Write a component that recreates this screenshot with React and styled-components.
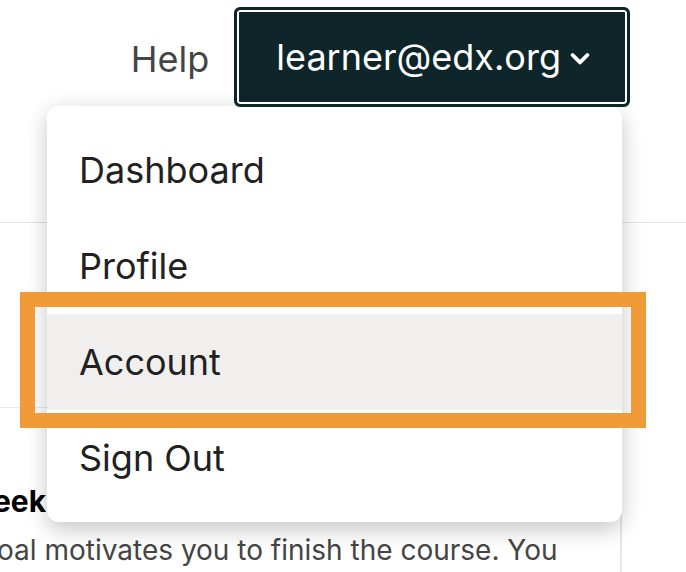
import styled, { createGlobalStyle } from 'styled-components';

const GlobalStyle = createGlobalStyle`
    html, body {
        margin: 0;
        padding: 0;
        background: #fff;
        overflow: hidden;
    }
    body {
        font-family: Inter, "Noto Sans", sans-serif;
    }
`;

export default function App() {
    return (
        <Page>
            <GlobalStyle />
            <Header>
                <Nav>
                    <HelpLink>Help</HelpLink>
                    <UserMenu>
                        <UserButton>
                            learner@edx.org
                            <Chevron />
                        </UserButton>
                        <Menu>
                            <MenuItem>Dashboard</MenuItem>
                            <MenuItem>Profile</MenuItem>
                            <MenuItem $active>Account</MenuItem>
                            <MenuItem>Sign Out</MenuItem>
                        </Menu>
                    </UserMenu>
                </Nav>
            </Header>
            <GoalCard>
                <CardTitle>eek</CardTitle>
                <CardText>oal motivates you to finish the course. You</CardText>
            </GoalCard>
        </Page>
    );
}

function Chevron() {
    return (
        <svg width="20" height="14" viewBox="0 0 20 14" fill="none">
            <path d="M2.6 3 L10 10.4 L17.4 3" stroke="#fff" strokeWidth="3.8" strokeLinecap="round" strokeLinejoin="round" />
        </svg>
    );
}

const Page = styled.div`
    width: 686px;
    height: 572px;
    overflow: hidden;
    position: relative;
`;

const Header = styled.header`
    box-sizing: border-box;
    height: 223px;
    border-bottom: 1px solid #e3e3e3;
    display: flex;
    justify-content: flex-end;
    align-items: flex-start;
    padding: 7px 56px 0 0;
`;

const Nav = styled.nav`
    display: flex;
    align-items: center;
    gap: 25px;
`;

const HelpLink = styled.a`
    font-size: 36px;
    color: #454545;
    line-height: 1;
    padding-top: 4px;
`;

const UserMenu = styled.div`
    position: relative;
`;

const UserButton = styled.button`
    box-sizing: border-box;
    height: 100px;
    display: flex;
    align-items: center;
    gap: 9px;
    padding: 0 37px 0 39px;
    background: #0e2629;
    border: 3px solid #0e2629;
    box-shadow: inset 0 0 0 2px #fff;
    border-radius: 6px;
    color: #fff;
    font-family: Inter, sans-serif;
    font-size: 36px;
    line-height: 1;
    position: relative;
    z-index: 3;

    svg {
        margin-top: 3px;
    }
`;

const Menu = styled.div`
    position: absolute;
    top: 99px;
    right: 8px;
    width: 575px;
    box-sizing: border-box;
    padding: 16px 0;
    background: #fff;
    border-radius: 12px;
    box-shadow: 0 10px 22px rgba(0, 0, 0, 0.16), 0 0 22px rgba(0, 0, 0, 0.08);
    z-index: 2;
`;

const MenuItem = styled.div`
    position: relative;
    height: 96px;
    display: flex;
    align-items: center;
    padding: 0 32px;
    font-size: 36px;
    color: #212121;
    background: ${(p) => (p.$active ? '#f0efed' : 'transparent')};

    ${(p) =>
        p.$active &&
        `
        &::after {
            content: '';
            position: absolute;
            top: -22px;
            bottom: -18px;
            left: -27px;
            right: -24px;
            border: 15px solid #f09a38;
        }
    `}
`;

const GoalCard = styled.section`
    margin-top: 184px;
    margin-left: -3px;
    width: 625px;
    height: 200px;
    box-sizing: border-box;
    border-top: 1px solid #e8e8e8;
    border-right: 2px solid #e8e8e8;
    padding-top: 78px;
`;

const CardTitle = styled.h3`
    margin: 0 0 0 -4px;
    font-size: 30px;
    font-weight: 700;
    color: #000;
    line-height: 1;
`;

const CardText = styled.p`
    margin: 20px 0 0;
    font-size: 28px;
    color: #454545;
    line-height: 1;
    white-space: nowrap;
`;
